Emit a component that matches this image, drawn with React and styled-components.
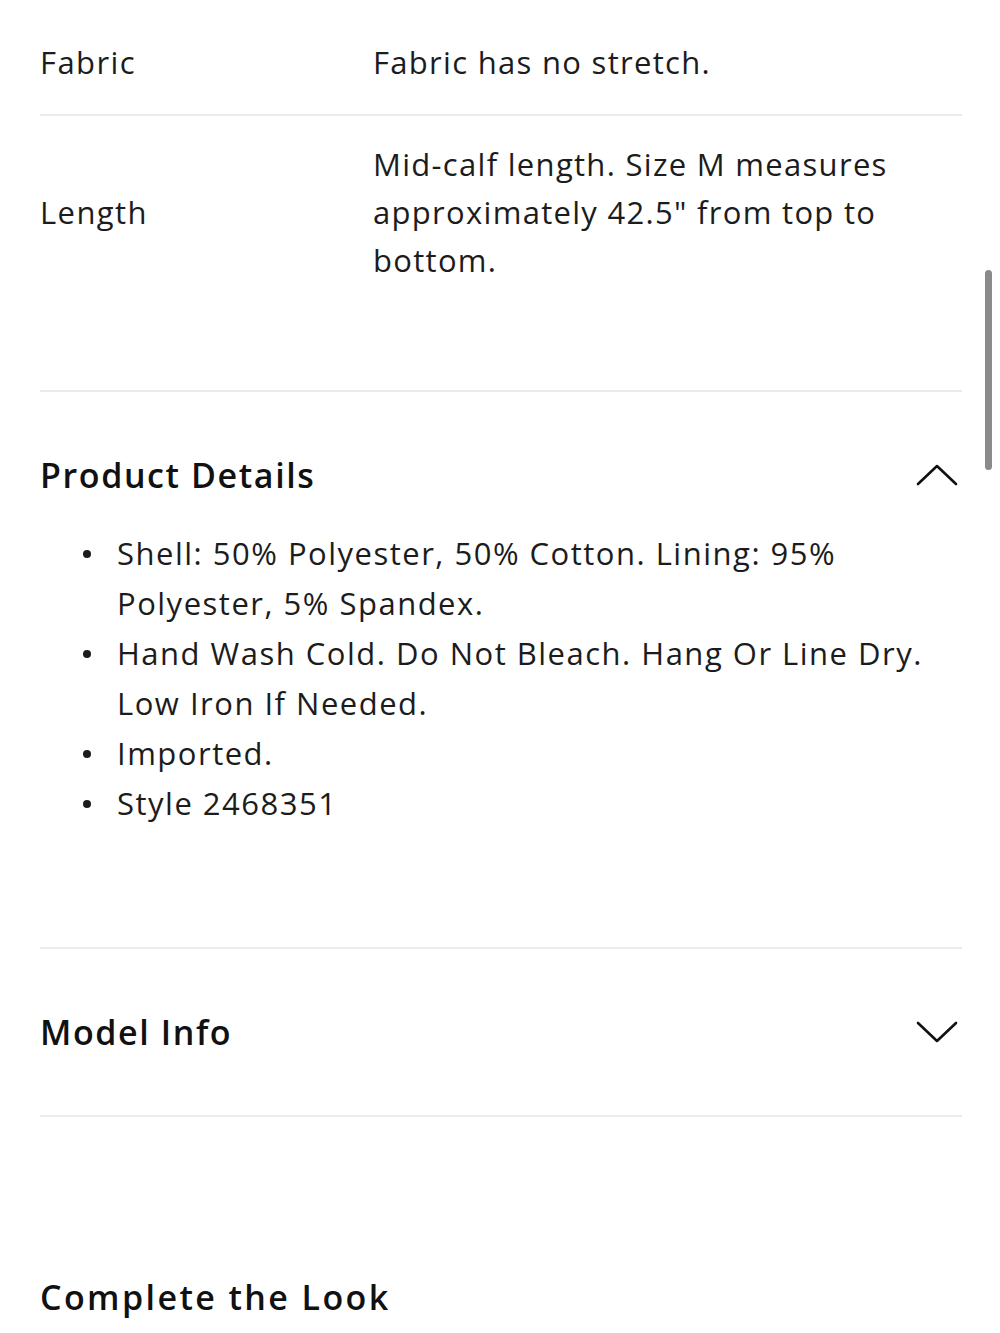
import styled, { createGlobalStyle } from 'styled-components';

const GlobalStyle = createGlobalStyle`
  html, body {
    margin: 0;
    padding: 0;
    background: #ffffff;
  }
  body {
    font-family: "Open Sans", "Noto Sans", sans-serif;
    color: #1c1c1c;
  }
`;

const Page = styled.div`
  position: relative;
  width: 1000px;
  height: 1333px;
  overflow: hidden;
  padding: 0 38px 0 40px;
  box-sizing: border-box;
`;

const SpecRow = styled.div`
  display: grid;
  grid-template-columns: 333px 1fr;
  align-items: center;
  padding: ${(p) => p.$pad};
  border-bottom: 2px solid #ebebeb;
`;

const Label = styled.div`
  font-size: 31px;
  line-height: 48px;
  letter-spacing: 1.4px;
  color: #1c1c1c;
`;

const Value = styled.div`
  font-size: 31px;
  line-height: 48px;
  letter-spacing: 1.3px;
  color: #1c1c1c;
  padding-right: 40px;
`;

const Section = styled.section`
  padding: ${(p) => p.$pad};
  border-bottom: 2px solid #ebebeb;
`;

const SectionHead = styled.div`
  display: flex;
  align-items: center;
  justify-content: space-between;
  height: 40px;
`;

const Heading = styled.h2`
  margin: ${(p) => p.$margin || 0};
  font-size: 34px;
  font-weight: 600;
  line-height: 40px;
  letter-spacing: ${(p) => p.$track || '1.6px'};
  color: #111;
`;

const List = styled.ul`
  margin: 33px 0 0;
  padding: 0 0 0 43px;
  list-style: none;
`;

const Item = styled.li`
  display: flex;
  align-items: flex-start;
  gap: 26px;
  font-size: 31px;
  line-height: 50px;
  letter-spacing: 1.5px;
  color: #1c1c1c;
`;

const Dot = styled.span`
  flex: none;
  width: 8px;
  height: 8px;
  margin-top: 22px;
  border-radius: 50%;
  background: #1c1c1c;
`;

const Toggle = styled.svg`
  flex: none;
  margin-right: 4px;
`;

const Scrollbar = styled.div`
  position: absolute;
  top: 270px;
  right: 8px;
  width: 7px;
  height: 200px;
  border-radius: 4px;
  background: #8a8a8a;
`;

const Chevron = ({ up }) => (
  <Toggle width="42" height="24" viewBox="0 0 42 24" fill="none">
    <polyline
      points={up ? '2,21 21,3 40,21' : '2,3 21,21 40,3'}
      stroke="#111"
      strokeWidth="2.6"
      strokeLinecap="round"
      strokeLinejoin="round"
    />
  </Toggle>
);

const details = [
  'Shell: 50% Polyester, 50% Cotton. Lining: 95% Polyester, 5% Spandex.',
  'Hand Wash Cold. Do Not Bleach. Hang Or Line Dry. Low Iron If Needed.',
  'Imported.',
  'Style 2468351',
];

export default function App() {
  return (
    <>
      <GlobalStyle />
      <Page>
        <SpecRow $pad="38px 0 28px">
          <Label>Fabric</Label>
          <Value>Fabric has no stretch.</Value>
        </SpecRow>
        <SpecRow $pad="24px 0 106px">
          <Label>Length</Label>
          <Value>
            Mid-calf length. Size M measures approximately 42.5" from top to bottom.
          </Value>
        </SpecRow>
        <Section $pad="63px 0 119px">
          <SectionHead>
            <Heading>Product Details</Heading>
            <Chevron up />
          </SectionHead>
          <List>
            {details.map((d) => (
              <Item key={d}>
                <Dot />
                <span>{d}</span>
              </Item>
            ))}
          </List>
        </Section>
        <Section $pad="63px 0 63px">
          <SectionHead>
            <Heading>Model Info</Heading>
            <Chevron />
          </SectionHead>
        </Section>
        <Heading $margin="160px 0 0" $track="2.4px">
          Complete the Look
        </Heading>
        <Scrollbar />
      </Page>
    </>
  );
}
